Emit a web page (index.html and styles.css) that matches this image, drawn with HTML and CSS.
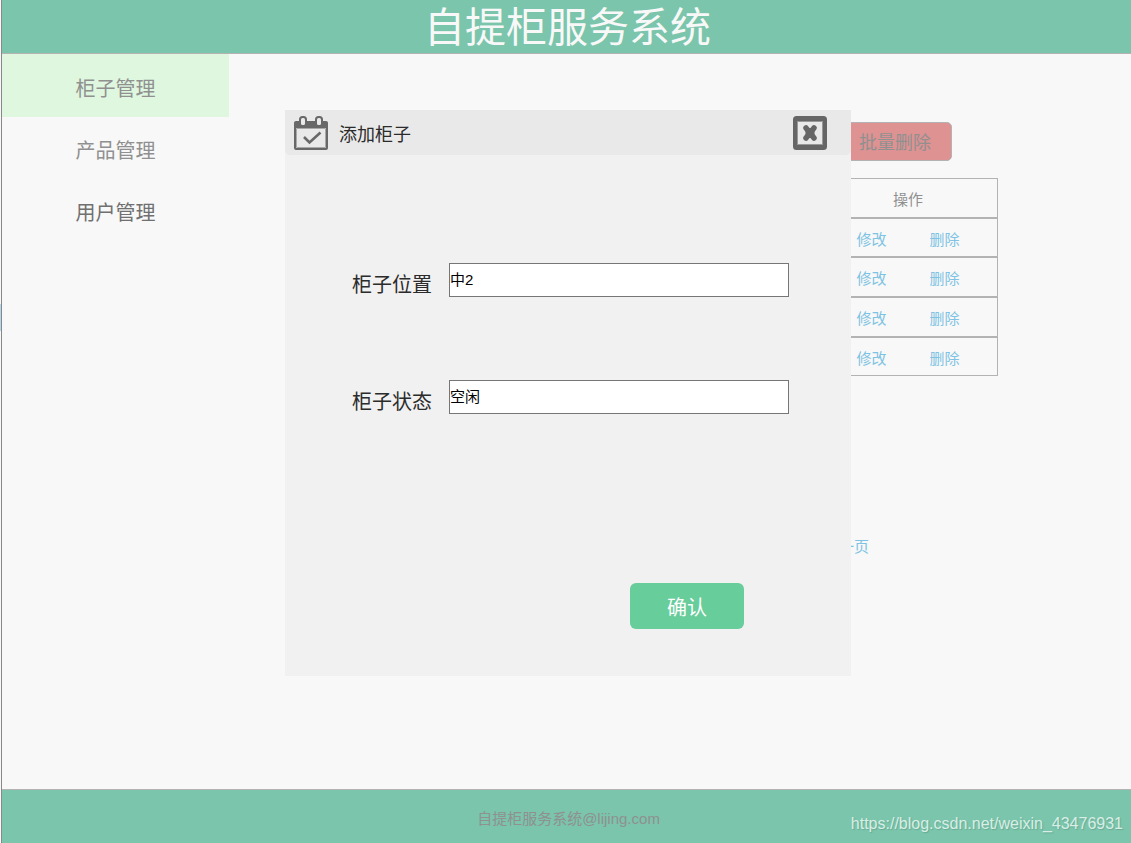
FILE: index.html
```html
<!DOCTYPE html>
<html lang="zh-CN">
<head>
<meta charset="utf-8">
<meta name="viewport" content="width=device-width, initial-scale=1">
<title>自提柜服务系统</title>
<link rel="stylesheet" href="styles.css">
</head>
<body>
<div class="page">
  <header class="header"><h1 class="title">自提柜服务系统</h1></header>
  <div class="body">
    <nav class="sidebar">
      <a class="nav-link active" href="#lockers">柜子管理</a>
      <a class="nav-link" href="#products">产品管理</a>
      <a class="nav-link strong" href="#users">用户管理</a>
    </nav>
    <main class="content">
      <div class="toolbar"><button class="batch-delete" type="button">批量删除</button></div>
      <table class="table">
        <thead><tr><th>操作</th></tr></thead>
        <tbody>
          <tr><td><div class="actions"><a href="#edit">修改</a><a href="#delete">删除</a></div></td></tr>
          <tr><td><div class="actions"><a href="#edit">修改</a><a href="#delete">删除</a></div></td></tr>
          <tr><td><div class="actions"><a href="#edit">修改</a><a href="#delete">删除</a></div></td></tr>
          <tr><td><div class="actions"><a href="#edit">修改</a><a href="#delete">删除</a></div></td></tr>
        </tbody>
      </table>
      <div class="pager"><a href="#next">下一页</a></div>
    </main>
  </div>
  <footer class="footer">
    <span class="copyright">自提柜服务系统@lijing.com</span>
    <span class="watermark">https://blog.csdn.net/weixin_43476931</span>
  </footer>
</div>
<div class="overlay">
  <form class="dialog" role="dialog" aria-labelledby="dialog-title">
    <div class="dialog-head">
      <svg class="icon" viewBox="0 0 34 34" aria-hidden="true">
        <rect x="1" y="7" width="32" height="26" rx="1" fill="#e9e9e9" stroke="#686868" stroke-width="2"/>
        <path d="M0 12V7q0-2 2-2h30q2 0 2 2v5z" fill="#686868"/>
        <path d="M2.500 12.500h29v19h-29z" fill="none" stroke="#a8a8a8"/>
        <rect x="6" y="1" width="6" height="9" rx="2.500" fill="#e9e9e9" stroke="#686868" stroke-width="2"/>
        <rect x="22" y="1" width="6" height="9" rx="2.500" fill="#e9e9e9" stroke="#686868" stroke-width="2"/>
        <path d="M10 21l5.500 5.500L26.500 16.500" fill="none" stroke="#686868" stroke-width="2.600"/>
      </svg>
      <h2 class="dialog-title" id="dialog-title">添加柜子</h2>
      <button class="close" type="button" aria-label="关闭">
        <svg class="icon" viewBox="0 0 34 34" aria-hidden="true">
          <rect x="2.500" y="2.500" width="29" height="29" rx="1" fill="#e9e9e9" stroke="#666" stroke-width="5"/>
          <rect x="4.500" y="5.500" width="25" height="23" fill="none" stroke="#999"/>
          <path d="M13 12l8 10M21 12l-8 10" fill="none" stroke="#666" stroke-width="5.500" stroke-linecap="round"/>
          <path d="M12.500 13l4.500-1 4.500 1v8l-4.500 1-4.500-1z" fill="#666"/>
        </svg>
      </button>
    </div>
    <div class="fields">
      <div class="field"><label for="position">柜子位置</label><input id="position" type="text" value="中2"></div>
      <div class="field"><label for="status">柜子状态</label><input id="status" type="text" value="空闲"></div>
    </div>
    <div class="dialog-foot"><button class="confirm" type="submit">确认</button></div>
  </form>
</div>
</body>
</html>
```
FILE: styles.css
```css
* { box-sizing: border-box; }
body {
  margin: 0;
  background: #f8f8f8;
  color: #909090;
  font-family: "Liberation Sans", "Noto Sans CJK SC", sans-serif;
  font-weight: 400;
}
/* thin marker on the window edge */
body::before {
  content: "";
  position: absolute;
  left: 0;
  top: 304px;
  width: 1px;
  height: 27px;
  background: #b5d8ef;
}
a { text-decoration: none; color: inherit; }
button, input { font: inherit; }
.page {
  min-height: 100vh;
  display: flex;
  flex-direction: column;
  border-left: 1px solid #888;
  margin-left: 1px;
}
.header {
  height: 54px;
  display: flex;
  align-items: center;
  justify-content: center;
  background: #7ac5ab;
  border-bottom: 1px solid #b3b3b3;
  padding: 2px 0 0 2px;
}
.title { margin: 0; color: #f8f8f8; font-size: 41px; line-height: 56px; font-weight: 400; }
.body { flex: 1; display: flex; }
.sidebar { width: 227px; }
.nav-link {
  display: flex;
  align-items: center;
  justify-content: center;
  height: 62px;
  padding-top: 3px;
  font-size: 20px;
}
.active { height: 63px; background: #dff7df; }
.strong { color: #707070; }
.content {
  flex: 1;
  display: flex;
  flex-direction: column;
  align-items: flex-end;
  padding: 68px 133px 0 0;
}
.toolbar { padding-right: 46px; }
.batch-delete {
  display: block;
  width: 112px;
  height: 39px;
  padding: 0 2px 2px 0;
  background: #df9292;
  border: 1px solid #b3b3b3;
  border-radius: 5px;
  color: #909090;
  font-size: 18px;
}
.table {
  width: 180px;
  margin-top: 17px;
  border-collapse: separate;
  border-spacing: 0;
  font-size: 15px;
  line-height: 20px;
}
.table th, .table td { height: 40px; padding: 4px 0 0; border: 1px solid #b3b3b3; font-weight: 400; }
.table tbody tr:nth-child(4) td, .table tbody tr:nth-child(1) td { height: 39px; }
.actions { display: flex; justify-content: center; gap: 43px; color: #7ec3e3; }
.pager { padding: 161px 129px 0 0; font-size: 15px; line-height: 20px; color: #7ec3e3; }
.footer {
  position: relative;
  height: 54px;
  display: flex;
  align-items: center;
  justify-content: center;
  padding: 1px 0 0 4px;
  background: #7ac5ab;
  border-top: 1px solid #b3b3b3;
  font-size: 15px;
}
.watermark {
  position: absolute;
  right: 8px;
  bottom: 9px;
  color: #d8eee6;
  font-size: 16px;
  line-height: 20px;
  text-shadow: 1px 1px 1px #68aa93;
}
.overlay {
  position: fixed;
  inset: 0;
  display: flex;
  align-items: flex-start;
  justify-content: center;
  padding: 110px 0 0 5px;
}
.dialog { width: 566px; background: #f1f1f1; color: #2b2b2b; }
.dialog-head {
  display: flex;
  align-items: center;
  height: 45px;
  padding: 0 24px 0 9px;
  background: #e9e9e9;
  border-radius: 0 0 5px 5px;
}
.icon { display: block; width: 34px; height: 34px; }
.dialog-title { flex: 1; margin: 0 0 0 11px; font-size: 18px; line-height: 24px; padding-top: 4px; font-weight: 400; }
.close { padding: 0; border: 0; background: none; }
.fields { display: grid; gap: 83px; padding: 108px 62px 0 67px; }
.field { display: flex; justify-content: space-between; }
.field label { padding-top: 8px; font-size: 20px; line-height: 28px; height: 34px; }
.field input {
  width: 340px;
  height: 34px;
  padding: 0 0 3px;
  border: 1px solid #767676;
  border-radius: 0;
  background: #fff;
  color: #000;
  font-size: 15px;
}
.dialog-foot { display: flex; justify-content: flex-end; padding: 169px 107px 47px 0; }
.confirm {
  width: 114px;
  height: 46px;
  padding: 0;
  border: 0;
  border-radius: 6px;
  background: #67cd9b;
  color: #fff;
  font-size: 20px;
}
```
